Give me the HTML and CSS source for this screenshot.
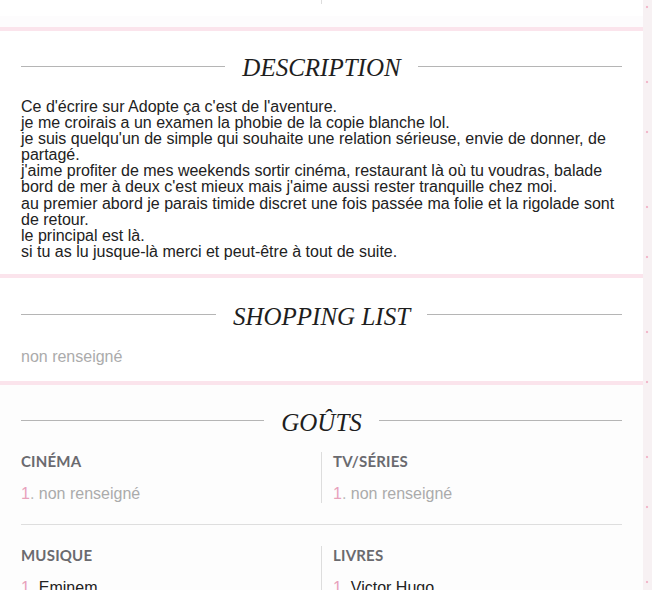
FILE: index.html
```html
<!DOCTYPE html>
<html lang="fr">
<head>
<meta charset="utf-8">
<title>Profil</title>
<link rel="stylesheet" href="styles.css">
</head>
<body>
<div class="page">
  <div class="wrap">
    <section class="card card-top">
      <div class="top-cols"><div class="top-col"></div><div class="top-col top-col-right"></div></div>
    </section>

    <section class="card card-desc">
      <h2 class="heading"><span class="rule"></span><span class="heading-text">DESCRIPTION</span><span class="rule"></span></h2>
      <p class="desc">Ce d'écrire sur Adopte ça c'est de l'aventure.<br>je me croirais a un examen la phobie de la copie blanche lol.<br>je suis quelqu'un de simple qui souhaite une relation sérieuse, envie de donner, de partagé.<br>j'aime profiter de mes weekends sortir cinéma, restaurant là où tu voudras, balade bord de mer à deux c'est mieux mais j'aime aussi rester tranquille chez moi.<br>au premier abord je parais timide discret une fois passée ma folie et la rigolade sont de retour.<br>le principal est là.<br>si tu as lu jusque-là merci et peut-être à tout de suite.</p>
    </section>

    <section class="card card-shop">
      <h2 class="heading"><span class="rule"></span><span class="heading-text">SHOPPING LIST</span><span class="rule"></span></h2>
      <p class="empty">non renseigné</p>
    </section>

    <section class="card card-gouts">
      <h2 class="heading"><span class="rule"></span><span class="heading-text">GOÛTS</span><span class="rule"></span></h2>
      <div class="grid-row">
        <div class="col">
          <h3 class="col-title">CINÉMA</h3>
          <ol class="list"><li><span class="num">1</span><span class="dot">.</span> <span class="na">non renseigné</span></li></ol>
        </div>
        <div class="col col-right">
          <h3 class="col-title">TV/SÉRIES</h3>
          <ol class="list"><li><span class="num">1</span><span class="dot">.</span> <span class="na">non renseigné</span></li></ol>
        </div>
      </div>
      <div class="grid-row grid-row-next">
        <div class="col">
          <h3 class="col-title">MUSIQUE</h3>
          <ol class="list"><li><span class="num">1</span><span class="dot">.</span> <span class="val">Eminem</span></li></ol>
        </div>
        <div class="col col-right">
          <h3 class="col-title">LIVRES</h3>
          <ol class="list"><li><span class="num">1</span><span class="dot">.</span> <span class="val">Victor Hugo</span></li></ol>
        </div>
      </div>
    </section>
  </div>
</div>
</body>
</html>
```

FILE: styles.css
```css
html, body {
  margin: 0;
  padding: 0;
}

body {
  background-color: #f7f1f3;
  background-image:
    radial-gradient(circle at 5px 7px, #f2b9cb 0, #f2b9cb 1px, transparent 1.6px),
    radial-gradient(circle at 5px 82px, #f2b9cb 0, #f2b9cb 1px, transparent 1.6px);
  background-size: 10px 125px;
  background-position: 642px 0;
  font-family: "Liberation Sans", Arial, sans-serif;
  overflow: hidden;
}

.page {
  width: 652px;
  height: 590px;
  overflow: hidden;
}

.wrap {
  width: 643px;
  background: #fbe4ec;
  display: flex;
  flex-direction: column;
  gap: 4px;
}

.card {
  background: #ffffff;
  padding: 0 21px;
}

.card-top {
  height: 27px;
  box-sizing: border-box;
  background: linear-gradient(#ffffff 0, #ffffff 16px, #fdfcfd 16px);
}

.top-cols {
  display: grid;
  grid-template-columns: 300px 1fr;
  height: 4px;
}

.top-col-right {
  border-left: 1px solid #dddddd;
}

.heading {
  margin: 0;
  display: flex;
  align-items: center;
  gap: 17px;
  font-family: "Liberation Serif", "Times New Roman", serif;
  font-style: italic;
  font-weight: normal;
  font-size: 25px;
  line-height: 30px;
  color: #1e1e1e;
}

.rule {
  flex: 1;
  height: 1px;
  background: #b5b5b5;
  margin-top: -4px;
}

.card-desc {
  padding-top: 22px;
  padding-bottom: 14px;
}

.desc {
  margin: 16px 0 0;
  font-size: 16px;
  line-height: 16.1px;
  color: #222222;
}

.card-shop {
  padding-top: 24px;
  padding-bottom: 16px;
}

.empty {
  margin: 17px 0 0;
  font-size: 16px;
  line-height: 16px;
  color: #ababab;
}

.card-gouts {
  padding-top: 23px;
  padding-bottom: 30px;
  background: #fdfdfd;
}

.grid-row {
  display: grid;
  grid-template-columns: 300px 1fr;
  padding: 14px 0 21px;
}

.grid-row-next {
  border-top: 1px solid #dedede;
  padding-top: 21px;
}

.col-right {
  border-left: 1px solid #dddddd;
  padding-left: 11px;
}

.col-title {
  margin: 0;
  font-family: Lato, "Open Sans", sans-serif;
  font-weight: 700;
  font-size: 15px;
  line-height: 18px;
  letter-spacing: 0.2px;
  color: #6a6a6f;
}

.list {
  list-style: none;
  margin: 15px 0 0;
  padding: 0;
  font-size: 16px;
  line-height: 18px;
}

.num {
  color: #e8a2bb;
}

.dot {
  color: #b9b9b9;
}

.na {
  color: #ababab;
}

.val {
  color: #222222;
}
```
